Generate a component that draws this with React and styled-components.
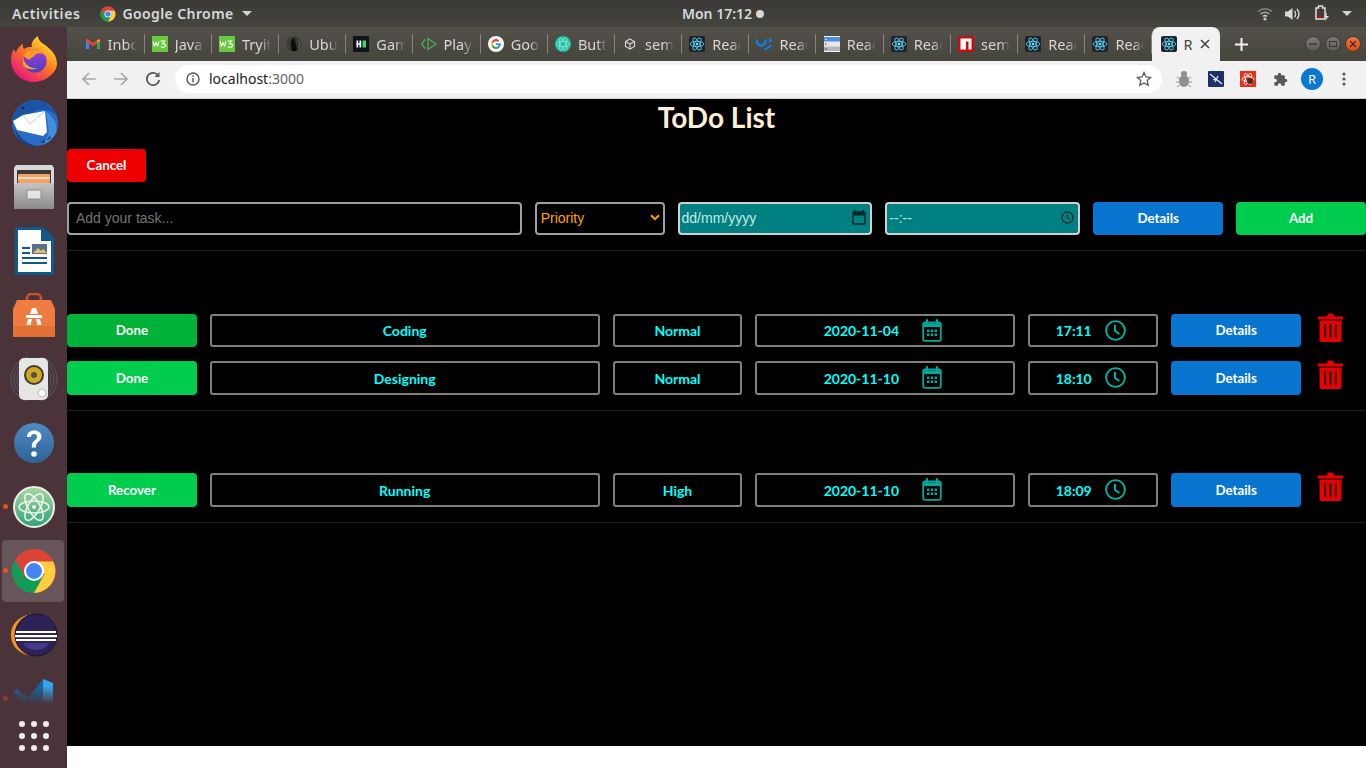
import styled, { createGlobalStyle } from "styled-components";

const activeRows = [
  { action: "Done", task: "Coding", priority: "Normal", date: "2020-11-04", time: "17:11", pressed: true },
  { action: "Done", task: "Designing", priority: "Normal", date: "2020-11-10", time: "18:10" },
];
const finishedRows = [
  { action: "Recover", task: "Running", priority: "High", date: "2020-11-10", time: "18:09" },
];

const tabs = [
  { icon: "gmail", label: "Inbox" },
  { icon: "w3", label: "Java" },
  { icon: "w3", label: "Tryit" },
  { icon: "ubuntu", label: "Ubuntu" },
  { icon: "hacker", label: "Game" },
  { icon: "play", label: "Play" },
  { icon: "google", label: "Google" },
  { icon: "styled", label: "Button" },
  { icon: "cube", label: "semantic" },
  { icon: "react", label: "React" },
  { icon: "mui", label: "React" },
  { icon: "stack", label: "React" },
  { icon: "react", label: "React" },
  { icon: "npm", label: "semantic" },
  { icon: "react", label: "React" },
  { icon: "react", label: "React" },
];

const GlobalStyle = createGlobalStyle`
  html, body {
    margin: 0;
    height: 768px;
    overflow: hidden;
    background: #fff;
  }
  * { box-sizing: border-box; }
`;

const Screen = styled.div`
  width: 1366px;
  height: 768px;
  display: flex;
  flex-direction: column;
`;

/* ubuntu top bar */
const TopBar = styled.div`
  height: 27px;
  flex: none;
  display: grid;
  grid-template-columns: 1fr auto 1fr;
  align-items: center;
  padding: 0 0 0 12px;
  background: linear-gradient(#3a3935, #45443f);
  color: #d6dbdb;
  font: 600 14px "Noto Sans", sans-serif;
  letter-spacing: 0.6px;
`;

const TopLeft = styled.div`
  display: flex;
  align-items: center;
`;

const AppMenu = styled.div`
  display: flex;
  align-items: center;
  gap: 6px;
  margin-left: 20px;
  letter-spacing: 0.4px;
`;

const Caret = styled.span`
  width: 0;
  height: 0;
  margin-left: 2px;
  border-left: 5px solid transparent;
  border-right: 5px solid transparent;
  border-top: 5px solid #d3d3cf;
`;

const Clock = styled.div`
  display: flex;
  align-items: center;
  gap: 4px;
  margin-left: 68px;
  letter-spacing: 0;
`;

const ClockDot = styled.span`
  width: 8px;
  height: 8px;
  border-radius: 50%;
  background: #d8d8d4;
`;

const Tray = styled.div`
  display: flex;
  align-items: center;
  justify-content: flex-end;
  gap: 12px;
  padding-right: 14px;
`;

const BatterySlot = styled.span`
  display: flex;
  margin: 0 -2px 0 2px;
`;

const Desktop = styled.div`
  flex: 1;
  display: flex;
  min-height: 0;
`;

/* launcher */
const Dock = styled.div`
  width: 67px;
  flex: none;
  display: flex;
  flex-direction: column;
  background: #4a343a;
`;

const DockItem = styled.div`
  position: relative;
  height: ${(p) => p.$height || 64}px;
  flex: none;
  display: flex;
  align-items: ${(p) => (p.$short ? "flex-start" : "center")};
  justify-content: center;
  padding-top: ${(p) => (p.$short ? 11 : 0)}px;
  overflow: ${(p) => (p.$short ? "hidden" : "visible")};
  &::before {
    content: "";
    display: ${(p) => (p.$active ? "block" : "none")};
    position: absolute;
    left: 2px;
    right: 3px;
    top: 1px;
    bottom: 1px;
    background: #675559;
    border-radius: 4px;
  }
  svg {
    position: relative;
  }
`;

const RunDot = styled.span`
  position: absolute;
  left: 3px;
  top: ${(p) => p.$top}px;
  width: 5px;
  height: 5px;
  border-radius: 50%;
  background: #e9501f;
  opacity: ${(p) => p.$fade || 1};
`;

const AppGrid = styled.div`
  display: grid;
  grid-template-columns: repeat(3, 6px);
  gap: 6px;
`;

const AppDot = styled.span`
  width: 6px;
  height: 6px;
  border-radius: 50%;
  background: #eeecec;
`;

/* chrome */
const Browser = styled.div`
  flex: 1;
  min-width: 0;
  display: flex;
  flex-direction: column;
`;

const TabStrip = styled.div`
  height: 34px;
  flex: none;
  display: flex;
  padding-left: 9.6px;
  background: linear-gradient(#53514a, #45443d);
`;

const Tab = styled.div`
  width: 67.2px;
  height: 34px;
  flex: none;
  display: flex;
  align-items: center;
  gap: 7px;
  padding-left: 8px;
  color: #d8d7d3;
  font: 400 14.5px "Noto Sans", sans-serif;
  svg {
    flex: none;
  }
  &::after {
    content: "";
    order: 3;
    width: 1px;
    height: 20px;
    margin-left: auto;
    background: #84827b;
  }
`;

const TabLabel = styled.span`
  width: 29px;
  flex: none;
  overflow: hidden;
  white-space: nowrap;
  -webkit-mask-image: linear-gradient(90deg, #000 65%, transparent);
  mask-image: linear-gradient(90deg, #000 65%, transparent);
`;

const ActiveTab = styled.div`
  width: 68px;
  height: 34px;
  flex: none;
  display: flex;
  align-items: center;
  gap: 7px;
  padding-left: 9px;
  background: #f1f1f1;
  border-radius: 8px 8px 0 0;
  color: #45443f;
  font: 400 14.5px "Noto Sans", sans-serif;
`;

const ActiveLabel = styled.span`
  width: 9px;
`;

const NewTab = styled.div`
  width: 44px;
  display: flex;
  align-items: center;
  justify-content: center;
`;

const WindowButtons = styled.div`
  margin-left: auto;
  display: flex;
  align-items: center;
  gap: 4px;
  padding-right: 5px;
`;

const WindowButton = styled.span`
  width: 16px;
  height: 16px;
  border-radius: 50%;
  display: flex;
  align-items: center;
  justify-content: center;
  background: ${(p) => (p.$close ? "linear-gradient(#f47a3c, #dd4814)" : "linear-gradient(#7d7b74, #5c5a54)")};
  border: 1px solid #3d3c37;
`;

const Toolbar = styled.div`
  height: 38px;
  flex: none;
  display: flex;
  align-items: center;
  padding-bottom: 1px;
  background: #f1f1f1;
  border-bottom: 1px solid #ccc;
`;

const NavButton = styled.span`
  width: 32px;
  display: flex;
  justify-content: center;
`;

const Nav = styled.div`
  display: flex;
  padding: 0 6px;
`;

const Omnibox = styled.div`
  width: 987px;
  height: 28px;
  flex: none;
  display: flex;
  align-items: center;
  gap: 8px;
  padding: 0 10px;
  background: #fff;
  border-radius: 14px;
  font: 400 14px "Noto Sans", sans-serif;
  color: #202124;
`;

const Port = styled.span`
  color: #5f6368;
`;

const Url = styled.span`
  flex: 1;
  padding-bottom: 2px;
`;

const Extensions = styled.div`
  display: flex;
  align-items: center;
  padding-left: 6px;
`;

const ExtSlot = styled.span`
  width: 32px;
  display: flex;
  justify-content: center;
`;

const Avatar = styled.span`
  width: 22px;
  height: 22px;
  border-radius: 50%;
  background: #0a78d2;
  color: #fff;
  font: 400 13px "Noto Sans", sans-serif;
  display: flex;
  align-items: center;
  justify-content: center;
`;

/* the todo page */
const Page = styled.div`
  height: 647px;
  flex: none;
  background: #000;
  font-family: Lato, sans-serif;
`;

const Title = styled.h1`
  margin: 0;
  height: 50px;
  text-align: center;
  color: #ffefd5;
  font: 700 28px/36px Lato, sans-serif;
`;

const Button = styled.button`
  height: ${(p) => p.$height || 33}px;
  width: ${(p) => (p.$width ? `${p.$width}px` : "100%")};
  border: 0;
  border-radius: 4px;
  padding: 0 0 ${(p) => (p.$lift ? 2 : 0)}px;
  color: #fff;
  font: 700 13.333px Lato, sans-serif;
  background: ${(p) => p.$bg};
`;

const FormRow = styled.div`
  display: grid;
  grid-template-columns: 3.5fr 1fr 1.5fr 1.5fr 1fr 1fr;
  column-gap: 13px;
  margin-top: 20px;
  padding-bottom: 15px;
  border-bottom: 1px solid #222;
`;

const TextInput = styled.input`
  height: 33px;
  width: 100%;
  padding: 0 7px 2px;
  background: #000;
  border: 2px solid #a0a0a0;
  border-radius: 4px;
  color: #fff;
  font: 400 14px "Liberation Sans", sans-serif;
  outline: none;
  &::placeholder {
    color: #757575;
  }
`;

const PrioritySelect = styled.div`
  height: 33px;
  display: flex;
  align-items: center;
  justify-content: space-between;
  padding: 0 3px 2px 4px;
  background: #000;
  border: 2px solid #a0a0a0;
  border-radius: 4px;
  color: #ffa500;
  font: 400 14px "Liberation Sans", sans-serif;
`;

const PickerField = styled.div`
  height: 33px;
  display: flex;
  align-items: center;
  justify-content: space-between;
  padding: 0 4px 2px 2px;
  background: #008080;
  border: 2px solid #d0d0d0;
  border-radius: 4px;
  color: #c8e8e6;
  font: 400 14px "Liberation Sans", sans-serif;
`;

const TodoSection = styled.div`
  padding: 62.6px 0 15px;
  display: flex;
  flex-direction: column;
  gap: 14px;
  border-bottom: 1px solid #222;
`;

const TodoRow = styled.div`
  display: grid;
  grid-template-columns: 1fr 3fr 1fr 2fr 1fr 1fr 0.4fr;
  column-gap: 13px;
  height: 33.5px;
`;

const Cell = styled.div`
  display: flex;
  align-items: center;
  justify-content: center;
  border: 2px solid #808080;
  border-radius: 3px;
  color: #00ffff;
  font: 700 14px Lato, sans-serif;
  padding-top: 1px;
  padding-right: ${(p) => p.$shift || 0}px;
`;

const CellIcon = styled.span`
  display: flex;
  margin-left: ${(p) => p.$gap}px;
  margin-top: -1px;
`;

const Trash = styled.div`
  display: flex;
  align-items: flex-start;
  padding-left: 4px;
  margin-top: -1px;
`;

const Footer = styled.div`
  flex: 1;
  background: #fff;
`;

const CalendarIcon = () => (
  <svg width="20" height="23" viewBox="0 0 20 23" fill="none">
    <path d="M5 1v4M15 1v4" stroke="#00a99d" strokeWidth="2" strokeLinecap="round" />
    <rect x="1.2" y="3.5" width="17.6" height="18.3" rx="1.8" stroke="#00a99d" strokeWidth="1.8" />
    <path d="M1.5 4.5h17v3.5h-17z" fill="#00a99d" />
    <path d="M5 10.5h2.4v2.4H5zM8.8 10.5h2.4v2.4H8.8zM12.6 10.5H15v2.4h-2.4zM5 14.6h2.4V17H5zM8.8 14.6h2.4V17H8.8zM12.6 14.6H15V17h-2.4z" fill="#00a99d" />
  </svg>
);

const ClockIcon = () => (
  <svg width="21" height="21" viewBox="0 0 21 21" fill="none">
    <circle cx="10.500" cy="10.500" r="9.400" stroke="#00b5a8" strokeWidth="1.900" />
    <path d="M10 5v6l4.400 3" stroke="#00b5a8" strokeWidth="1.900" />
  </svg>
);

const TrashIcon = () => (
  <svg width="25" height="29" viewBox="0 0 25 29">
    <path d="M0 3.400h8.600L9.600 1.600C10 .8 10.600 .4 11.400 .4h2.200c.8 0 1.400 .4 1.800 1.200l1 1.800H25v3H0z" fill="#e60000" />
    <path fillRule="evenodd" d="M1.500 7.500h22v19.400c0 1.200-.9 2.100-2.100 2.100H3.600c-1.200 0-2.100-.9-2.100-2.100zM6.500 11v14h1.600V11zM11.700 11v14h1.600V11zM16.900 11v14h1.600V11z" fill="#e60000" />
  </svg>
);

const DateGlyph = () => (
  <svg width="14" height="15" viewBox="0 0 14 15" fill="none">
    <path d="M3 0v3M11 0v3" stroke="#06292b" strokeWidth="1.600" />
    <rect x="1" y="2" width="12" height="12" rx="1" stroke="#06292b" strokeWidth="1.600" />
    <rect x="1" y="2" width="12" height="3.500" fill="#06292b" />
  </svg>
);

const TimeGlyph = () => (
  <svg width="13" height="13" viewBox="0 0 13 13" fill="none">
    <circle cx="6.500" cy="6.500" r="5.500" stroke="#06292b" strokeWidth="1.300" />
    <path d="M6.300 3v3.800l2.700 1.500" stroke="#06292b" strokeWidth="1.100" />
  </svg>
);

const SelectChevron = () => (
  <svg width="10" height="7" viewBox="0 0 10 7" fill="none">
    <path d="M1 1.200l4 4 4-4" stroke="#ffa500" strokeWidth="2" />
  </svg>
);

const ReactFavicon = () => (
  <svg width="16" height="16" viewBox="0 0 16 16">
    <rect width="16" height="16" rx="2" fill="#20232a" />
    <g fill="none" stroke="#61dafb" strokeWidth="0.800">
      <ellipse cx="8" cy="8" rx="6.800" ry="2.700" />
      <ellipse cx="8" cy="8" rx="6.800" ry="2.700" transform="rotate(60 8 8)" />
      <ellipse cx="8" cy="8" rx="6.800" ry="2.700" transform="rotate(120 8 8)" />
    </g>
    <circle cx="8" cy="8" r="1.400" fill="#61dafb" />
  </svg>
);

const Favicon = ({ name }) => {
  switch (name) {
    case "gmail":
      return (
        <svg width="16" height="16" viewBox="0 0 16 16" fill="none">
          <path d="M1 3.500v9.500h3V6.500z" fill="#4285f4" />
          <path d="M15 3.500v9.500h-3V6.500z" fill="#34a853" />
          <path d="M1 5V3.200L2.500 2.700 8 7l5.500-4.300 1.500.5V5L8 10.300z" fill="#ea4335" />
          <path d="M12 6.500l3-1.500V3.200l-3 1.800z" fill="#fbbc04" />
        </svg>
      );
    case "w3":
      return (
        <svg width="16" height="16" viewBox="0 0 16 16">
          <rect width="16" height="16" fill="#69c93e" />
          <path d="M1 5.500l1.500 4.500 1.500-3.200L5.500 10 7 5.500M8.500 5h4L10.500 7.600c1.700 0 3 .7 3 2 0 2-3.400 2.300-4.800.8" stroke="#fff" strokeWidth="1.100" fill="none" />
        </svg>
      );
    case "ubuntu":
      return (
        <svg width="16" height="16" viewBox="0 0 16 16">
          <circle cx="8" cy="8" r="7.500" fill="#3a3936" />
          <path d="M5.500 15c.5-3-.8-4.500-.6-7.500C5 4 6.800 2 8.500 1.500 7.800 3 9 4 9.500 6c.4 2-.5 2.500 1 4.500 1 1.500.2 3-.5 4.500z" fill="#0c0c0c" />
          <path d="M12 3.500c2 2 2.500 6 .5 9" stroke="#6b6a66" fill="none" />
        </svg>
      );
    case "hacker":
      return (
        <svg width="16" height="16" viewBox="0 0 16 16">
          <rect width="16" height="16" fill="#0e141e" />
          <rect x="3.500" y="4.500" width="1.700" height="7" fill="#fff" />
          <rect x="6.500" y="4.500" width="1.700" height="7" fill="#fff" />
          <rect x="3.500" y="7.200" width="4.500" height="1.500" fill="#fff" />
          <rect x="9.500" y="4.500" width="3.500" height="7" fill="#39d66b" />
        </svg>
      );
    case "play":
      return (
        <svg width="16" height="16" viewBox="0 0 16 16" fill="none" stroke="#4caf50" strokeWidth="1.300">
          <path d="M4 3.500L.8 8 4 12.500" />
          <path d="M7 2.500v11L15 8z" />
        </svg>
      );
    case "google":
      return (
        <svg width="16" height="16" viewBox="0 0 16 16">
          <circle cx="8" cy="8" r="8" fill="#fff" />
          <path d="M12.800 8.200c0-.4 0-.7-.1-1H8v1.900h2.700c-.1.600-.5 1.200-1 1.500l1.500 1.200c.9-.8 1.600-2.100 1.600-3.600z" fill="#4285f4" />
          <path d="M8 13c1.300 0 2.400-.4 3.200-1.200l-1.500-1.200c-.4.300-1 .5-1.700.5-1.300 0-2.400-.9-2.800-2L3.600 10.200C4.400 11.900 6.100 13 8 13z" fill="#34a853" />
          <path d="M5.200 9.100c-.2-.7-.2-1.500 0-2.200L3.600 5.700c-.7 1.400-.7 3.100 0 4.500z" fill="#fbbc04" />
          <path d="M8 5.200c.7 0 1.400.3 1.900.7l1.400-1.400C10.400 3.600 9.300 3 8 3 6.100 3 4.400 4.100 3.600 5.800l1.600 1.200c.4-1 1.500-1.800 2.800-1.800z" fill="#ea4335" />
        </svg>
      );
    case "styled":
      return (
        <svg width="16" height="16" viewBox="0 0 16 16">
          <circle cx="8" cy="8" r="8" fill="#1dc3a4" />
          <g fill="none" stroke="#b9f0e4" strokeWidth="0.600">
            <ellipse cx="8" cy="8" rx="6.500" ry="2.800" />
            <ellipse cx="8" cy="8" rx="6.500" ry="2.800" transform="rotate(60 8 8)" />
            <ellipse cx="8" cy="8" rx="6.500" ry="2.800" transform="rotate(120 8 8)" />
          </g>
        </svg>
      );
    case "cube":
      return (
        <svg width="16" height="16" viewBox="0 0 16 16" fill="none" stroke="#d6d6d2" strokeWidth="1.100">
          <path d="M8 3l4.500 2.500v5L8 13l-4.500-2.500v-5zM3.500 5.500L8 8l4.500-2.500M8 8v5" />
        </svg>
      );
    case "mui":
      return (
        <svg width="16" height="16" viewBox="0 0 16 16" fill="#0d7fe0">
          <path d="M0 3l2 1.200v3L5 9l3-1.800V4.200L10.500 3v5.500L5 12 0 8.500z" transform="translate(0 -.5)" />
          <path d="M13 3l2.500-1v3.500L13 7zM15.500 8v2.500L9 14.500 7.500 13.500z" />
        </svg>
      );
    case "stack":
      return (
        <svg width="16" height="16" viewBox="0 0 16 16">
          <rect width="16" height="16" fill="#f5f5f5" />
          <rect y="1" width="16" height="4.500" fill="#4a8fdc" />
          <rect y="6" width="16" height="4" fill="#e8e8e8" />
          <rect y="10.500" width="16" height="4.500" fill="#b5b5b5" />
          <rect x="1" y="3" width="1.500" height="1" fill="#fff" />
          <rect x="1" y="7.500" width="1.500" height="1" fill="#333" />
          <rect x="1" y="12.500" width="1.500" height="1" fill="#333" />
        </svg>
      );
    case "npm":
      return (
        <svg width="16" height="16" viewBox="0 0 16 16">
          <rect width="16" height="16" fill="#cb0c0f" />
          <path d="M2.500 2.500h11v11h-3V5.500H8v8H2.500z" fill="#fff" />
        </svg>
      );
    default:
      return <ReactFavicon />;
  }
};

const Firefox = () => (
  <svg width="46" height="47" viewBox="0 0 46 47">
    <defs>
      <linearGradient id="ffa" x1="0.800" y1="0.100" x2="0.200" y2="0.900">
        <stop offset="0" stopColor="#ffe02e" />
        <stop offset="0.450" stopColor="#ff7a1f" />
        <stop offset="1" stopColor="#e8197a" />
      </linearGradient>
      <linearGradient id="ffb" x1="0.500" y1="0" x2="0.500" y2="1">
        <stop offset="0" stopColor="#a13fd0" />
        <stop offset="1" stopColor="#4a3fc0" />
      </linearGradient>
    </defs>
    <path d="M23 46C10 46 0 36 0 24c0-5 1.500-9 3-11 .5 2 1.200 3 2 3.500C6 13 9.500 9 12 8c-.5 2.500 0 4 1 5 3-2 5-2 8-2 -1-3 0-7 6-11 0 4 3 6 7 9 5 3.500 10 9 11 13 .7 3 1 4 1 6C46 36 35 46 23 46z" fill="url(#ffa)" />
    <circle cx="24" cy="25" r="11.500" fill="url(#ffb)" />
    <path d="M12 19c3-4 9-6 15-5 4 .7 7 3 8 6-3-3-7-3.500-10-2 -2 1-.5 2-3 3 -2 1-3 1-3 3 -2-1-5-2-7-5z" fill="#ff9a22" />
    <path d="M12 22c2 7 8 11 14 10 -5 3-11 1-14-3z" fill="#ffb52e" opacity="0.900" />
  </svg>
);

const Thunderbird = () => (
  <svg width="48" height="48" viewBox="0 0 48 48">
    <circle cx="25" cy="24" r="23" fill="#2a6bc4" />
    <path d="M2 26C2 13 12 1 25 1c9 0 17 6 21 15-7-6-15-7-22-3L8 19z" fill="#1b53a6" />
    <path d="M36 13c6 3 11 11 11 18-2 7-8 13-15 15 5-5 8-12 6-20z" fill="#3f8fdc" />
    <path d="M3 27l4 10c4 7 11 11 20 10-9-2-15-6-19-12z" fill="#12408c" />
    <path d="M30 44c2-1 3-2 4-4l1 4zM36 41c2-1 3-3 4-5l.5 4z" fill="#12408c" />
    <path d="M3 22l10-6 22-4 2 21-4 4-26-6z" fill="#fff" />
    <path d="M13 16l7 9 15-13" fill="none" stroke="#c8ced8" strokeWidth="1" />
    <circle cx="13" cy="9" r="1.500" fill="#0b2e66" />
  </svg>
);

const FileCabinet = () => (
  <svg width="40" height="44" viewBox="0 0 40 44">
    <defs>
      <linearGradient id="cab" x1="0" y1="0" x2="0" y2="1">
        <stop offset="0" stopColor="#c4c4c4" />
        <stop offset="1" stopColor="#8a8a8a" />
      </linearGradient>
    </defs>
    <path d="M2 0h36l2 3v39a2 2 0 0 1-2 2H2a2 2 0 0 1-2-2V3z" fill="#d8d8d8" />
    <rect x="3" y="5" width="34" height="13" fill="#3e3a36" />
    <rect x="4" y="9" width="32" height="9" rx="1" fill="#f4a460" />
    <rect x="4" y="12" width="32" height="2" fill="#e8dcc8" />
    <rect y="18" width="40" height="26" rx="2" fill="url(#cab)" />
    <rect x="13" y="25" width="14" height="9" rx="1.500" fill="#e4e4e4" stroke="#8a8a8a" />
  </svg>
);

const Writer = () => (
  <svg width="40" height="48" viewBox="0 0 40 48">
    <path d="M1 0h28l11 11v37H1z" fill="#0f5a8a" />
    <path d="M4 3h23v11h10v31H4z" fill="#fff" />
    <path d="M29 0l11 11H29z" fill="#0f5a8a" />
    <rect x="18" y="17" width="15" height="10" fill="#59708a" />
    <path d="M19 26l5-5 3 3 2-2 4 4z" fill="#e8c070" />
    <path d="M8 20h8v2H8zM8 25h8v2H8zM8 30h25v2H8zM8 35h25v2H8z" fill="#0f5a8a" />
  </svg>
);

const SoftwareBag = () => (
  <svg width="42" height="44" viewBox="0 0 42 44">
    <path d="M14 12V6c0-3 2-5 4-5h6c2 0 4 2 4 5v6" fill="none" stroke="#c8532a" strokeWidth="2.500" />
    <path d="M4 7h34l4 9v28H0V16z" fill="#ee7b3f" />
    <rect y="33" width="42" height="11" fill="#e26f33" />
    <path d="M19 15h4l2 6h-8zM13 22h16v3H13zM15 26h4l-1.500 6h-4zM23 26h4l1.500 6h-4z" fill="#fff" />
  </svg>
);

const Speaker = () => (
  <svg width="48" height="44" viewBox="0 0 48 44">
    <g fill="none" stroke="#6a7aa0" opacity="0.500">
      <circle cx="24" cy="22" r="17" />
      <circle cx="24" cy="22" r="20" />
      <circle cx="24" cy="22" r="23" />
    </g>
    <rect x="9" y="1" width="29" height="42" rx="5" fill="#e6e6e4" />
    <circle cx="24" cy="18" r="10" fill="#3a3a36" />
    <circle cx="24" cy="18" r="8" fill="#d2a820" />
    <circle cx="24" cy="18" r="3" fill="#55534a" />
    <circle cx="32" cy="36" r="4" fill="#fafafa" stroke="#bbb" />
  </svg>
);

const HelpIcon = () => (
  <svg width="40" height="40" viewBox="0 0 40 40">
    <defs>
      <linearGradient id="hlp" x1="0" y1="0" x2="0" y2="1">
        <stop offset="0" stopColor="#4f8ac4" />
        <stop offset="1" stopColor="#2d6396" />
      </linearGradient>
    </defs>
    <circle cx="20" cy="20" r="20" fill="url(#hlp)" />
    <path d="M13 14c0-4 3-6.500 7.200-6.500 4.300 0 7.300 2.600 7.300 6 0 5-5.500 5-5.500 10v1h-4.200v-1.500c0-5.500 5.200-5.800 5.200-9.300 0-1.500-1.300-2.600-3-2.600-1.800 0-3 1.200-3.200 3z" fill="#fff" />
    <circle cx="20" cy="31" r="2.800" fill="#fff" />
  </svg>
);

const AtomIcon = () => (
  <svg width="42" height="42" viewBox="0 0 42 42">
    <defs>
      <linearGradient id="atm" x1="0" y1="0" x2="0" y2="1">
        <stop offset="0" stopColor="#a9d79f" />
        <stop offset="1" stopColor="#2ea37a" />
      </linearGradient>
    </defs>
    <circle cx="21" cy="21" r="20" fill="url(#atm)" stroke="#ececec" strokeWidth="2" />
    <g fill="none" stroke="#f2f7ee" strokeWidth="1.500">
      <ellipse cx="21" cy="21" rx="15" ry="6" />
      <ellipse cx="21" cy="21" rx="15" ry="6" transform="rotate(60 21 21)" />
      <ellipse cx="21" cy="21" rx="15" ry="6" transform="rotate(120 21 21)" />
    </g>
    <circle cx="21" cy="21" r="2" fill="#f2f7ee" />
  </svg>
);

const ChromeLogo = ({ size }) => (
  <svg width={size} height={size} viewBox="0 0 48 48">
    <circle cx="24" cy="24" r="23" fill="#db4437" />
    <path d="M24 24L4 35.500A23 23 0 0 0 24 47l11-20z" fill="#0f9d58" />
    <path d="M4.100 12.500A23 23 0 0 0 4 35.500L14 29z" fill="#0f9d58" />
    <path d="M24 14h20a23 23 0 0 1-20 33l11-20z" fill="#ffcd40" />
    <circle cx="24" cy="24" r="10.500" fill="#fff" />
    <circle cx="24" cy="24" r="8.300" fill="#4285f4" />
  </svg>
);

const Eclipse = () => (
  <svg width="48" height="44" viewBox="0 0 48 44">
    <path d="M25 1C11 1 1 10 1 22s10 21 24 21C14 40 7 32 7 22S14 4 25 1z" fill="#f7941e" />
    <circle cx="26" cy="22" r="21" fill="#2c2255" stroke="#15103a" />
    <path d="M6 18h40v2H6zM5 22h42v2.200H5zM6 26h40v2H6z" fill="#fff" />
    <path d="M13 30h26c-3 5-8 7-13 7s-10-2-13-7z" fill="#473788" />
  </svg>
);

const FadedSvg = styled.svg`
  -webkit-mask-image: linear-gradient(#000 20%, transparent 62%);
  mask-image: linear-gradient(#000 20%, transparent 62%);
`;

const VsCode = () => (
  <FadedSvg width="42" height="42" viewBox="0 0 42 42">
    <path d="M0 14l4-3 11 9L30 1l10 4v32l-10 4-15-18-11 9-4-3 8-7z" fill="#17659e" />
    <path d="M30 1l10 4v32l-10 4z" fill="#33a5e8" />
  </FadedSvg>
);

const TopPanel = () => (
  <TopBar>
    <TopLeft>
      <span>Activities</span>
      <AppMenu>
        <ChromeLogo size={16} />
        <span>Google Chrome</span>
        <Caret />
      </AppMenu>
    </TopLeft>
    <Clock>
      Mon 17:12
      <ClockDot />
    </Clock>
    <Tray>
      <svg width="16" height="14" viewBox="0 0 16 14" fill="none" stroke="#c8c8c4" strokeWidth="1.600">
        <path d="M1 4.500C5 .8 11 .8 15 4.500" opacity="0.500" />
        <path d="M3.500 7C6 4.800 10 4.800 12.500 7" opacity="0.700" />
        <path d="M6 9.500c1.200-1 2.800-1 4 0" />
        <circle cx="8" cy="12" r="0.800" fill="#e8e8e4" />
      </svg>
      <svg width="16" height="14" viewBox="0 0 16 14" fill="#d8d8d4">
        <path d="M0 4.500h3L7.500 1v12L3 9.500H0z" />
        <path d="M9.500 4c1.400 1.600 1.400 4.400 0 6M12 2c2.600 2.800 2.600 7.200 0 10" fill="none" stroke="#d8d8d4" strokeWidth="1.400" />
      </svg>
      <BatterySlot>
        <svg width="15" height="17" viewBox="0 0 15 17" fill="none">
          <path d="M1 3h2.500V1h4v2H10v11H1z" stroke="#e0e0dc" strokeWidth="1.500" />
          <rect x="2.500" y="11" width="4" height="2" fill="#d00" />
          <path d="M12 7l-3 5h2.500L10 16l4-5h-2.500z" fill="#e0e0dc" />
        </svg>
      </BatterySlot>
      <Caret />
    </Tray>
  </TopBar>
);

const Launcher = () => (
  <Dock>
    <DockItem><Firefox /></DockItem>
    <DockItem><Thunderbird /></DockItem>
    <DockItem><FileCabinet /></DockItem>
    <DockItem><Writer /></DockItem>
    <DockItem><SoftwareBag /></DockItem>
    <DockItem><Speaker /></DockItem>
    <DockItem><HelpIcon /></DockItem>
    <DockItem>
      <RunDot $top={29} />
      <AtomIcon />
    </DockItem>
    <DockItem $active>
      <RunDot $top={29} />
      <ChromeLogo size={46} />
    </DockItem>
    <DockItem><Eclipse /></DockItem>
    <DockItem $short $height={37}>
      <RunDot $top={29} $fade={0.4} />
      <VsCode />
    </DockItem>
    <DockItem>
      <AppGrid>
        {Array.from({ length: 9 }).map((_, i) => (
          <AppDot key={i} />
        ))}
      </AppGrid>
    </DockItem>
  </Dock>
);

const BrowserChrome = () => (
  <>
    <TabStrip>
      {tabs.map((tab, i) => (
        <Tab key={i}>
          <Favicon name={tab.icon} />
          <TabLabel>{tab.label}</TabLabel>
        </Tab>
      ))}
      <ActiveTab>
        <ReactFavicon />
        <ActiveLabel>R</ActiveLabel>
        <svg width="10" height="10" viewBox="0 0 10 10" stroke="#45443f" strokeWidth="1.600">
          <path d="M1 1l8 8M9 1l-8 8" />
        </svg>
      </ActiveTab>
      <NewTab>
        <svg width="13" height="13" viewBox="0 0 13 13" stroke="#f4f4f2" strokeWidth="2">
          <path d="M6.500 0v13M0 6.500h13" />
        </svg>
      </NewTab>
      <WindowButtons>
        <WindowButton>
          <svg width="8" height="8" viewBox="0 0 8 8" stroke="#3a3935" strokeWidth="1.400"><path d="M0 4h8" /></svg>
        </WindowButton>
        <WindowButton>
          <svg width="8" height="8" viewBox="0 0 8 8" fill="none" stroke="#3a3935" strokeWidth="1"><rect x=".5" y="1.500" width="7" height="5" /></svg>
        </WindowButton>
        <WindowButton $close>
          <svg width="8" height="8" viewBox="0 0 8 8" stroke="#4a2010" strokeWidth="1.200"><path d="M1 1l6 6M7 1L1 7" /></svg>
        </WindowButton>
      </WindowButtons>
    </TabStrip>
    <Toolbar>
      <Nav>
        <NavButton>
          <svg width="16" height="16" viewBox="0 0 16 16" fill="none" stroke="#a8a8a8" strokeWidth="1.700"><path d="M15 8H2M8 2L2 8l6 6" /></svg>
        </NavButton>
        <NavButton>
          <svg width="16" height="16" viewBox="0 0 16 16" fill="none" stroke="#a8a8a8" strokeWidth="1.700"><path d="M1 8h13M8 2l6 6-6 6" /></svg>
        </NavButton>
        <NavButton>
          <svg width="16" height="16" viewBox="0 0 16 16" fill="none" stroke="#55585c" strokeWidth="1.800"><path d="M13.500 5A6.200 6.200 0 1 0 14.200 9" /><path d="M14.500 1v5h-5" fill="#55585c" stroke="none" /></svg>
        </NavButton>
      </Nav>
      <Omnibox>
        <svg width="16" height="16" viewBox="0 0 16 16" fill="none" stroke="#55585c" strokeWidth="1.400">
          <circle cx="8" cy="8" r="6" />
          <path d="M8 7v4.500M8 4.300v1.500" />
        </svg>
        <Url>localhost<Port>:3000</Port></Url>
        <svg width="16" height="16" viewBox="0 0 16 16" fill="none" stroke="#55585c" strokeWidth="1.300">
          <path d="M8 1.500l2 4.400 4.700.5-3.500 3.200 1 4.700L8 11.900l-4.200 2.400 1-4.700L1.300 6.400 6 5.900z" />
        </svg>
      </Omnibox>
      <Extensions>
        <ExtSlot>
          <svg width="16" height="18" viewBox="0 0 16 18" fill="#8e8e8a">
            <ellipse cx="8" cy="11" rx="5" ry="6" />
            <circle cx="8" cy="4" r="3" />
            <path d="M1 7l3 2M15 7l-3 2M0 12h3M16 12h-3M1 17l3-2.500M15 17l-3-2.500" stroke="#8e8e8a" />
          </svg>
        </ExtSlot>
        <ExtSlot>
          <svg width="16" height="16" viewBox="0 0 16 16">
            <rect width="16" height="16" rx="1" fill="#1c2f66" />
            <path d="M2 3l12 10M5 9l3-1M7 11l3-6" stroke="#e8ecf4" strokeWidth="1.200" />
          </svg>
        </ExtSlot>
        <ExtSlot>
          <svg width="16" height="16" viewBox="0 0 16 16">
            <rect width="16" height="16" fill="#e8301f" />
            <ellipse cx="8" cy="8" rx="6" ry="2.500" fill="none" stroke="#fff" strokeWidth="0.800" />
            <ellipse cx="8" cy="8" rx="6" ry="2.500" fill="none" stroke="#fff" strokeWidth="0.800" transform="rotate(60 8 8)" />
            <ellipse cx="8" cy="8" rx="6" ry="2.500" fill="none" stroke="#fff" strokeWidth="0.800" transform="rotate(120 8 8)" />
            <circle cx="10" cy="10" r="3" fill="#4a2a20" />
          </svg>
        </ExtSlot>
        <ExtSlot>
          <svg width="15" height="15" viewBox="0 0 24 24" fill="#55585c">
            <path d="M20.500 11H19V7a2 2 0 0 0-2-2h-4V3.500a2.500 2.500 0 0 0-5 0V5H4a2 2 0 0 0-2 2v3.800h1.500a2.700 2.700 0 0 1 0 5.400H2V20a2 2 0 0 0 2 2h3.800v-1.500a2.700 2.700 0 0 1 5.400 0V22H17a2 2 0 0 0 2-2v-4h1.500a2.500 2.500 0 0 0 0-5z" />
          </svg>
        </ExtSlot>
        <ExtSlot><Avatar>R</Avatar></ExtSlot>
        <ExtSlot>
          <svg width="4" height="14" viewBox="0 0 4 14" fill="#55585c">
            <circle cx="2" cy="2" r="1.600" />
            <circle cx="2" cy="7" r="1.600" />
            <circle cx="2" cy="12" r="1.600" />
          </svg>
        </ExtSlot>
      </Extensions>
    </Toolbar>
  </>
);

const TodoItem = ({ todo }) => (
  <TodoRow>
    <Button $height={33.5} $bg={todo.pressed ? "#00b338" : "#00cc4e"}>{todo.action}</Button>
    <Cell>{todo.task}</Cell>
    <Cell>{todo.priority}</Cell>
    <Cell $shift={5}>
      {todo.date}
      <CellIcon $gap={23}><CalendarIcon /></CellIcon>
    </Cell>
    <Cell $shift={5}>
      {todo.time}
      <CellIcon $gap={13}><ClockIcon /></CellIcon>
    </Cell>
    <Button $height={33.5} $bg="#0a75d1">Details</Button>
    <Trash><TrashIcon /></Trash>
  </TodoRow>
);

const App = () => (
  <Screen>
    <GlobalStyle />
    <TopPanel />
    <Desktop>
      <Launcher />
      <Browser>
        <BrowserChrome />
        <Page>
          <Title>ToDo List</Title>
          <Button $lift $width={79} $bg="#ee0000">Cancel</Button>
          <FormRow>
            <TextInput placeholder="Add your task..." />
            <PrioritySelect>
              Priority
              <SelectChevron />
            </PrioritySelect>
            <PickerField>
              dd/mm/yyyy
              <DateGlyph />
            </PickerField>
            <PickerField>
              --:--
              <TimeGlyph />
            </PickerField>
            <Button $lift $bg="#0a75d1">Details</Button>
            <Button $lift $bg="#00cc4e">Add</Button>
          </FormRow>
          <TodoSection>
            {activeRows.map((todo) => (
              <TodoItem key={todo.task} todo={todo} />
            ))}
          </TodoSection>
          <TodoSection>
            {finishedRows.map((todo) => (
              <TodoItem key={todo.task} todo={todo} />
            ))}
          </TodoSection>
        </Page>
        <Footer />
      </Browser>
    </Desktop>
  </Screen>
);

export default App;
